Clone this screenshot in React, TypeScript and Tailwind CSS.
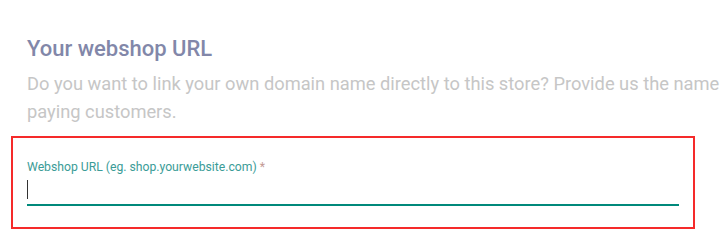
import React from "react";

export default function App() {
  return (
    <div
      className="w-[721px] h-[244px] overflow-hidden bg-white"
      style={{ fontFamily: "Roboto, 'Liberation Sans', sans-serif" }}
    >
      <div className="pl-[27px] pt-[35px]">
        <h2 className="text-[22px] leading-[28px] font-medium text-[#8287a9] whitespace-nowrap">
          Your webshop URL
        </h2>
        <p className="mt-[7px] text-[18.3px] leading-[28px] text-[#c6c6c6] whitespace-nowrap">
          <span className="block">
            Do you want to link your own domain name directly to this store? Provide us the name of the domain you own and we will make sure it can be reached by your
          </span>
          <span className="block">paying customers.</span>
        </p>
      </div>
      <div className="ml-[11px] mt-[10px] w-[684px] h-[93px] border-2 border-[#f52a2a] pl-[14px] pt-[21px]">
        <label className="block text-[12.2px] leading-[16px] text-[#3b9c97] whitespace-nowrap">
          Webshop URL (eg. shop.yourwebsite.com) <span className="text-[#c49a94]">*</span>
        </label>
        <div className="mt-[4px] w-[652px] h-[27px] border-b-2 border-[#00897b] flex items-start pt-[1px]">
          <div className="w-px h-[19px] bg-[#333]" />
        </div>
      </div>
    </div>
  );
}
